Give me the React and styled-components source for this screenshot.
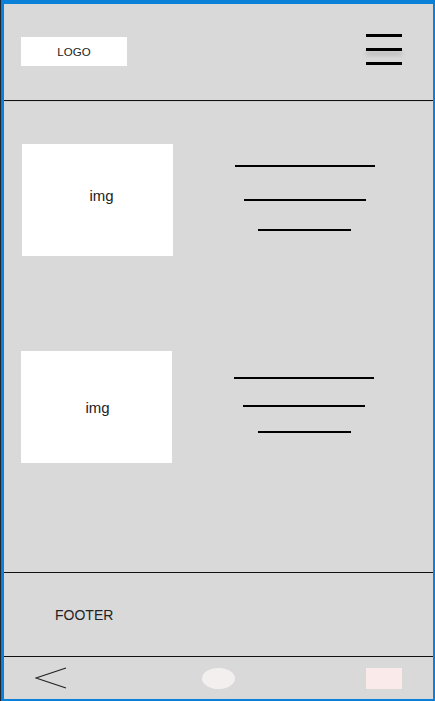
import React from 'react'
import styled, { createGlobalStyle } from 'styled-components'

const GlobalStyle = createGlobalStyle`
  * { box-sizing: border-box; }
  html, body { margin: 0; padding: 0; }
  body {
    font-family: "Liberation Sans", Arial, sans-serif;
    background: #0b80d8;
  }
`

const cards = [
  {
    id: 1,
    indent: 18,
    textShift: { x: 4, y: -5 },
    lines: [
      { w: 140, top: 21 },
      { w: 122, top: 32 },
      { w: 93, top: 28 },
    ],
  },
  {
    id: 2,
    indent: 17,
    textShift: { x: 1, y: 0 },
    lines: [
      { w: 140, top: 26 },
      { w: 122, top: 26 },
      { w: 93, top: 24 },
    ],
  },
]

const App = () => {
  return (
    <>
      <GlobalStyle />
      <Frame>
        <Screen>
          <Header>
            <Logo>LOGO</Logo>
            <Burger>
              <span />
              <span className='mid' />
              <span />
            </Burger>
          </Header>

          <Content>
            {cards.map(card => (
              <Card key={card.id} $indent={card.indent}>
                <ImgBox $dx={card.textShift.x} $dy={card.textShift.y}>img</ImgBox>
                <Lines>
                  {card.lines.map((l, i) => (
                    <TextLine key={i} $w={l.w} $top={l.top} />
                  ))}
                </Lines>
              </Card>
            ))}
          </Content>

          <Footer>FOOTER</Footer>

          <NavBar>
            <BackIcon width='32' height='22' viewBox='0 0 32 22'>
              <polyline points='31,1 1,11 31,21' fill='none' stroke='#222' strokeWidth='1.1' />
            </BackIcon>
            <HomeButton />
            <RecentButton />
          </NavBar>
        </Screen>
      </Frame>
    </>
  )
}

const Frame = styled.div`
  width: 435px;
  height: 701px;
  padding: 4px 2px 2px 3px;
  border-left: 1px solid #1c2530;
  background: #0b80d8;
`

const Screen = styled.div`
  height: 100%;
  display: flex;
  flex-direction: column;
  background: #d9d9d9;
  color: #222;
`

const Header = styled.header`
  height: 97px;
  flex-shrink: 0;
  display: flex;
  justify-content: space-between;
  align-items: flex-start;
  padding: 0 31px 0 17px;
  border-bottom: 1px solid #111;
  box-shadow: 0 1px 1px -1px rgba(0, 0, 0, 0.25);
`

const Logo = styled.div`
  margin-top: 33px;
  width: 106px;
  height: 29px;
  background: #fff;
  display: flex;
  justify-content: center;
  align-items: center;
  font-size: 11.5px;
  letter-spacing: 0.1px;
`

const Burger = styled.div`
  margin-top: 30px;
  display: flex;
  flex-direction: column;
  gap: 11px;

  span {
    display: block;
    width: 36px;
    height: 3px;
    background: #000;
  }

  .mid {
    box-shadow: 0 4px 4px rgba(0, 0, 0, 0.18);
  }
`

const Content = styled.main`
  flex: 1;
  display: flex;
  flex-direction: column;
  gap: 95px;
  padding-top: 43px;
`

const Card = styled.div`
  display: flex;
  padding-left: ${p => p.$indent}px;
`

const ImgBox = styled.div`
  width: 151px;
  height: 112px;
  flex-shrink: 0;
  background: #fff;
  display: flex;
  justify-content: center;
  align-items: center;
  font-size: 15px;
  padding-left: ${p => Math.max(p.$dx, 0) * 2}px;
  padding-bottom: ${p => Math.max(-p.$dy, 0) * 2}px;
`

const Lines = styled.div`
  flex: 1;
  display: flex;
  flex-direction: column;
  align-items: center;
  padding-left: 3px;
`

const TextLine = styled.div`
  width: ${p => p.$w}px;
  height: 2px;
  margin-top: ${p => p.$top}px;
  background: #000;
`

const Footer = styled.footer`
  height: 85px;
  flex-shrink: 0;
  display: flex;
  align-items: center;
  padding-left: 51px;
  font-size: 14px;
  border-top: 1px solid #111;
  border-bottom: 1px solid #111;
`

const NavBar = styled.nav`
  height: 42px;
  flex-shrink: 0;
  display: grid;
  grid-template-columns: 1fr auto 1fr;
  align-items: center;
  padding: 0 31px;
`

const BackIcon = styled.svg`
  justify-self: start;
  display: block;
`

const HomeButton = styled.div`
  width: 33px;
  height: 21px;
  border-radius: 50%;
  background: #f4efef;
`

const RecentButton = styled.div`
  justify-self: end;
  width: 36px;
  height: 21px;
  background: #fbeaea;
`

export default App
